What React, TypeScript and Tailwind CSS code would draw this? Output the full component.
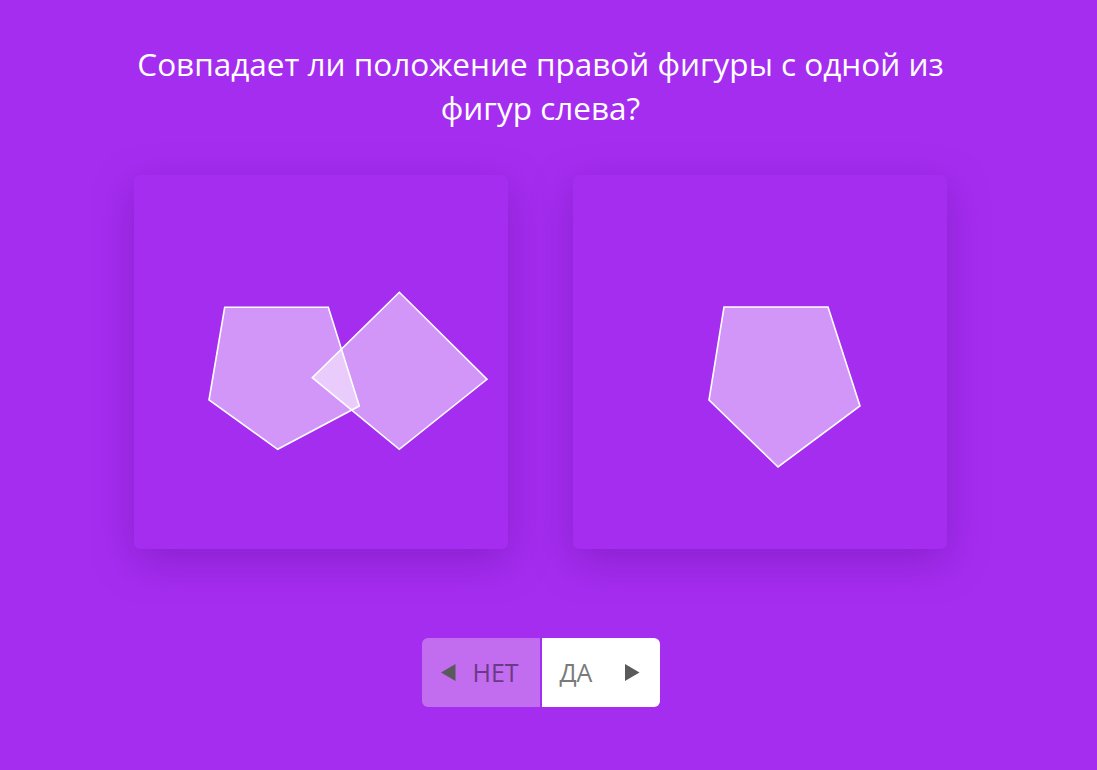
import React from 'react';

const leftPentagon = '90.7,132.3 194.3,132.3 225.3,231 143.7,274.3 75,225';
const leftSquare = '265.3,117.3 353,204.3 265.3,274.3 178.3,202.7';
const rightPentagon = '151,132 255,132 287,231 205,292 136,225';

function Card({ shapes }: { shapes: string[] }) {
  return (
    <div className="w-[374px] h-[374px] rounded-md bg-[#a52df0] shadow-[0_12px_40px_rgba(90,10,140,0.35)]">
      <svg width="374" height="374" viewBox="0 0 374 374">
        {shapes.map((pts) => (
          <polygon key={pts} points={pts} fill="rgba(255,255,255,0.5)" stroke="#ffffff" strokeWidth="1.6" />
        ))}
      </svg>
    </div>
  );
}

export default function App() {
  return (
    <div className="w-[1097px] h-[770px] bg-[#a52df0] font-['Open_Sans',sans-serif] overflow-hidden">
      <div className="w-[1081px] flex flex-col items-center">
        <h1 className="mt-[42px] w-[850px] text-center text-white text-[31.5px] leading-[44px] font-normal">
          Совпадает ли положение правой фигуры с одной из фигур слева?
        </h1>

        <div className="mt-[45px] flex gap-[65px]">
          <Card shapes={[leftPentagon, leftSquare]} />
          <Card shapes={[rightPentagon]} />
        </div>

        <div className="mt-[89px] flex h-[69px] rounded-md overflow-hidden">
          <button className="w-[118px] flex items-center bg-[#c26cf0] pl-[18px]">
            <svg width="16" height="19" viewBox="0 0 16 19">
              <polygon points="15.5,1 15.5,18 1,9.5" fill="#5a5a5a" />
            </svg>
            <span className="ml-[17px] text-[25px] text-[#6a3a86]">НЕТ</span>
          </button>
          <div className="w-[2px] bg-[#a52df0]" />
          <button className="w-[118px] flex items-center bg-white pl-[18px]">
            <span className="text-[25px] text-[#7a7a7a]">ДА</span>
            <svg width="16" height="19" viewBox="0 0 16 19" className="ml-[32px]">
              <polygon points="1,1 1,18 15.5,9.5" fill="#5a5a5a" />
            </svg>
          </button>
        </div>
      </div>
    </div>
  );
}
